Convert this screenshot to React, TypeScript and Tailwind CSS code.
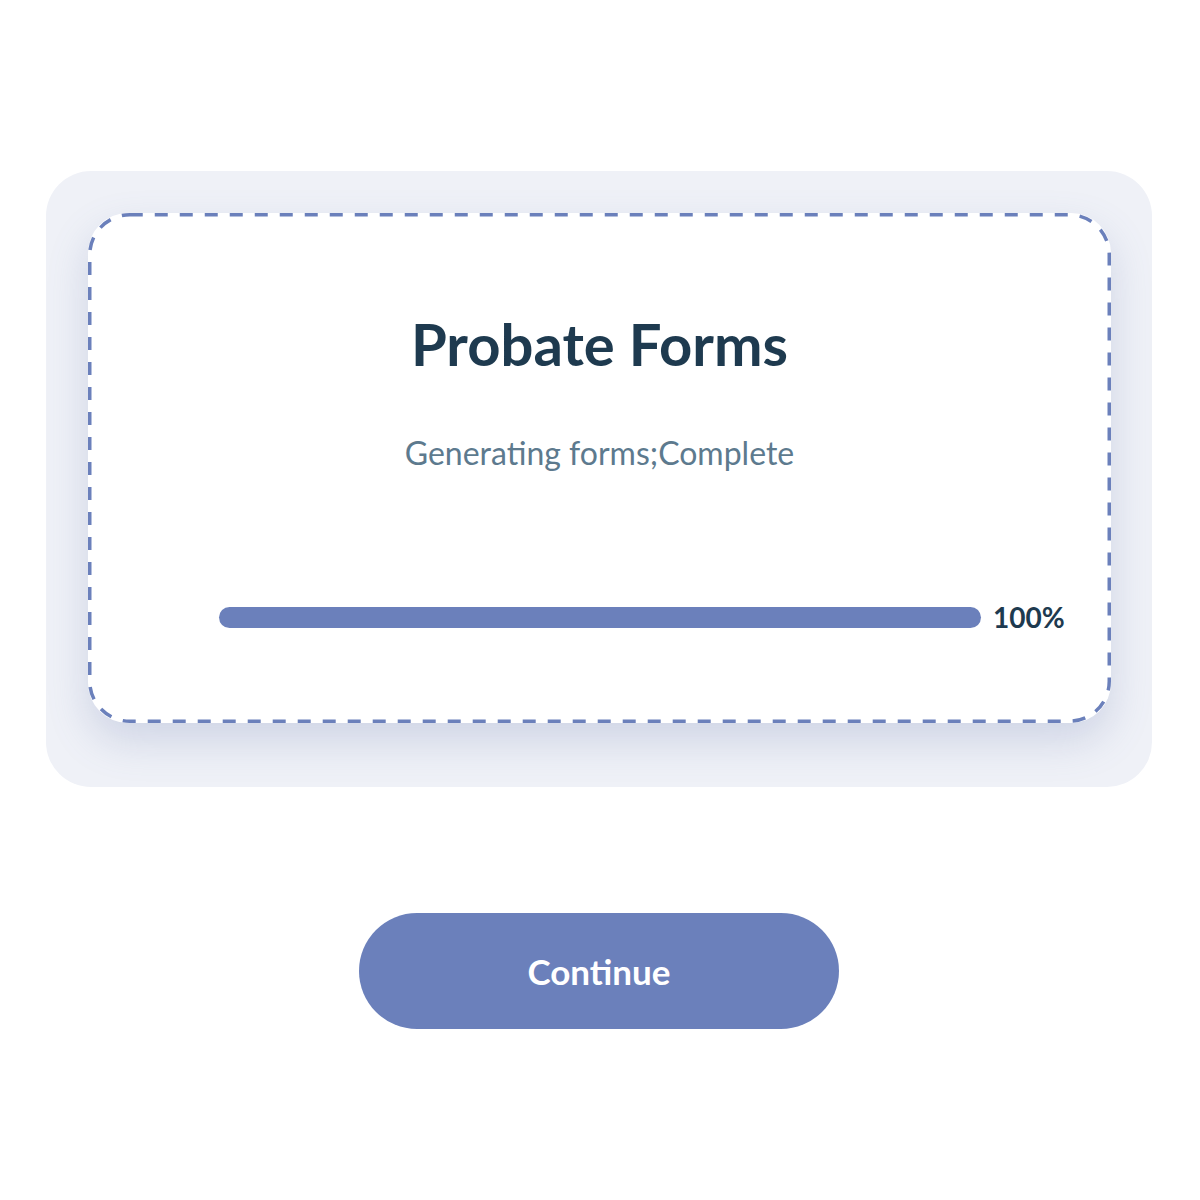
export default function App() {
  return (
    <div className="w-full h-[1200px] bg-white font-['Lato',sans-serif] pt-[171px] pl-[46px]">
      <div className="w-[1106px] h-[616px] rounded-[45px] bg-[#eff1f7] pt-[42px] pl-[42px]">
        <div className="relative w-[1023px] h-[510px] rounded-[40px] bg-white shadow-[0_18px_40px_rgba(95,112,170,0.22)] flex flex-col items-center">
          <svg className="absolute inset-0 pointer-events-none" width="1023" height="510">
            <rect
              x="1.75"
              y="1.75"
              width="1019.5"
              height="506.5"
              rx="40"
              fill="none"
              stroke="#6b80bb"
              strokeWidth="3.5"
              strokeDasharray="13 12"
            />
          </svg>
          <h1 className="mt-[102px] text-[58px] leading-none font-bold text-[#1e3a4f]">
            Probate Forms
          </h1>
          <p className="mt-[64px] text-[32px] leading-none text-[#5d7a8e]">
            Generating forms;Complete
          </p>
          <div className="mt-[134px] w-full flex items-center pl-[131px]">
            <div className="w-[762px] h-[21px] rounded-full bg-[#6b80bb]" />
            <span className="ml-[12px] text-[28px] leading-none font-bold text-[#1e3a4f]">100%</span>
          </div>
        </div>
      </div>
      <div className="w-[1106px] flex justify-center mt-[126px]">
        <button className="w-[480px] h-[116px] rounded-full bg-[#6b80bb] text-white text-[35px] font-bold">
          Continue
        </button>
      </div>
    </div>
  );
}
